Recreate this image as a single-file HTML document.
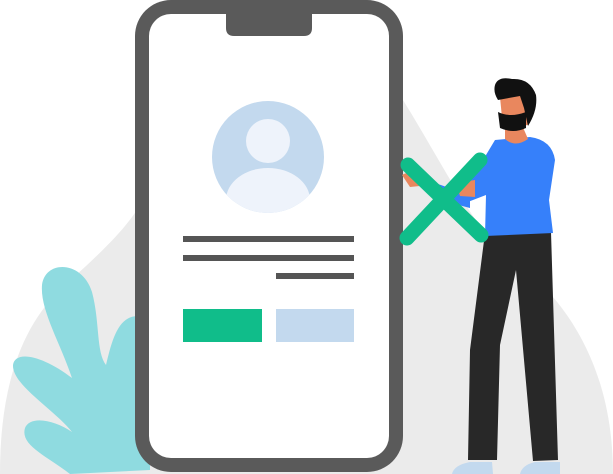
<!DOCTYPE html>
<html><head><style>html,body{margin:0;padding:0;background:#fff;width:613px;height:474px;overflow:hidden}</style></head><body>
<svg width="613" height="474" viewBox="0 0 613 474" xmlns="http://www.w3.org/2000/svg">
<path d="M0 474 C0 400 15 330 65 285 C110 245 128 225 140 205 L403 100 C440 160 470 220 500 250 C560 290 613 360 613 474 Z" fill="#ebebeb"/>
<path d="M70 474 C45 455 20 445 25 428 C30 415 55 420 72 432 C55 410 12 385 13 365 C15 350 42 355 72 378 C60 342 40 310 42 285 C45 260 82 260 92 292 C100 322 96 352 106 365 C112 340 118 316 138 316 L150 316 L150 470 Z" fill="#8fdbe0"/>
<rect x="135" y="0" width="268" height="472" rx="36" fill="#5a5a5a"/>
<rect x="149" y="14" width="240" height="444" rx="22" fill="#fff"/>
<path d="M226 14 H312 V28 Q312 36 304 36 H234 Q226 36 226 28 Z" fill="#5a5a5a"/>
<circle cx="268" cy="157" r="56" fill="#c3d9ee"/>
<clipPath id="c"><circle cx="268" cy="157" r="56"/></clipPath>
<circle cx="268" cy="141" r="22" fill="#eef3fb"/>
<ellipse cx="268" cy="200" rx="42" ry="32" fill="#eef3fb" clip-path="url(#c)"/>
<rect x="183" y="236" width="171" height="6" fill="#555"/>
<rect x="183" y="255" width="171" height="6" fill="#555"/>
<rect x="276" y="273" width="78" height="6" fill="#555"/>
<rect x="183" y="309" width="79" height="33" fill="#10bd8a"/>
<rect x="276" y="309" width="78" height="33" fill="#c3d9ee"/>
<path d="M452 474 Q454 465 470 462 L492 462 L493 474 Z" fill="#c3d9ee"/>
<path d="M520 474 Q522 465 535 462 L560 462 L560 474 Z" fill="#c3d9ee"/>
<path d="M485 233 L551 232 L558 460 L533 461 L516 270 L500 345 L497 460 L468 460 L470 350 Z" fill="#282828"/>
<path d="M435 183 L470 195 L470 208 L432 198 Z" fill="#3680fa"/>
<path d="M495 140 L530 137 Q552 140 555 160 L549 200 L553 233 L485 236 L486 195 L460 205 L455 185 L480 165 Z" fill="#3680fa"/>
<path d="M402 175 Q410 170 418 176 L420 186 L410 187 Z" fill="#e9875e"/>
<path d="M456 183 L475 180 L475 197 L460 196 Z" fill="#e9875e"/>
<path d="M505 125 L522 125 L528 139 Q515 148 505 139 Z" fill="#e9875e"/>
<path d="M500 97 L525 95 L528 125 L503 128 Z" fill="#e9875e"/>
<path d="M498 112 Q510 118 526 112 L526 128 Q513 134 500 128 Z" fill="#111"/>
<path d="M495 85 Q498 76 512 79 Q530 78 536 95 Q538 110 528 126 L524 108 L520 96 L498 100 Q493 92 495 85 Z" fill="#111"/>
<path d="M408 165 L481 235 M480 160 L407 238" stroke="#10bd8a" stroke-width="15" stroke-linecap="round"/>
</svg>
</body></html>
